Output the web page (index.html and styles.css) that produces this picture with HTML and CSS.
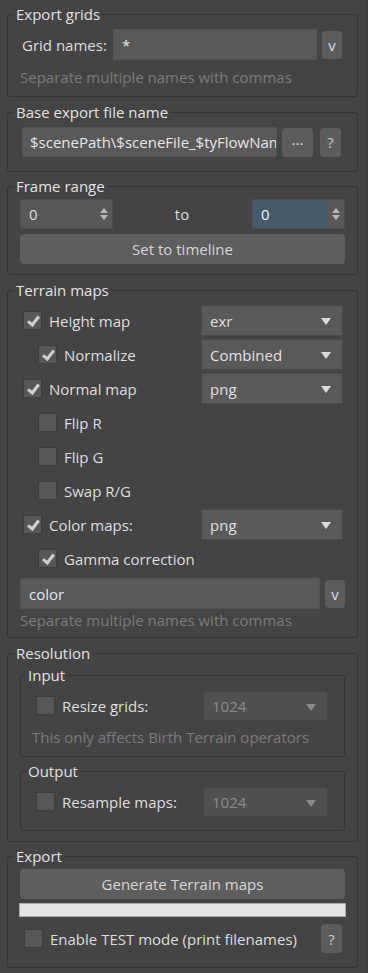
FILE: index.html
```html
<!DOCTYPE html>
<html lang="en">
<head>
  <meta charset="UTF-8">
  <title>Export Terrain</title>
  <link rel="stylesheet" href="styles.css">
</head>
<body>
  <div class="panel">

    <!-- Export grids -->
    <fieldset class="group g-grids">
      <legend>Export grids</legend>
      <div class="row names-row">
        <span class="lbl">Grid names:</span>
        <div class="field grow">*</div>
        <div class="btn v-btn">v</div>
      </div>
      <div class="hint">Separate multiple names with commas</div>
    </fieldset>

    <!-- Base file name -->
    <fieldset class="group g-base">
      <legend>Base export file name</legend>
      <div class="row path-row">
        <div class="field grow path">$scenePath\$sceneFile_$tyFlowName</div>
        <div class="btn dots-btn">...</div>
        <div class="btn q-btn">?</div>
      </div>
    </fieldset>

    <!-- Frame range -->
    <fieldset class="group g-frames">
      <legend>Frame range</legend>
      <div class="row range-row">
        <div class="spinner">
          <span class="spin-val">0</span>
          <span class="arrows"><i class="up"></i><i class="down"></i></span>
        </div>
        <span class="to">to</span>
        <div class="spinner active">
          <span class="spin-val">0</span>
          <span class="arrows"><i class="up"></i><i class="down"></i></span>
        </div>
      </div>
      <div class="btn wide timeline-btn">Set to timeline</div>
    </fieldset>

    <!-- Terrain maps -->
    <fieldset class="group g-maps">
      <legend>Terrain maps</legend>
      <div class="maps">
        <div class="row check-row">
          <span class="cb on"></span><span class="cb-lbl">Height map</span>
          <div class="drop">exr</div>
        </div>
        <div class="row check-row sub">
          <span class="cb on"></span><span class="cb-lbl">Normalize</span>
          <div class="drop">Combined</div>
        </div>
        <div class="row check-row">
          <span class="cb on"></span><span class="cb-lbl">Normal map</span>
          <div class="drop">png</div>
        </div>
        <div class="row check-row sub">
          <span class="cb"></span><span class="cb-lbl">Flip R</span>
        </div>
        <div class="row check-row sub">
          <span class="cb"></span><span class="cb-lbl">Flip G</span>
        </div>
        <div class="row check-row sub">
          <span class="cb"></span><span class="cb-lbl">Swap R/G</span>
        </div>
        <div class="row check-row">
          <span class="cb on"></span><span class="cb-lbl">Color maps:</span>
          <div class="drop">png</div>
        </div>
        <div class="row check-row sub">
          <span class="cb on"></span><span class="cb-lbl">Gamma correction</span>
        </div>
      </div>
      <div class="row color-row">
        <div class="field grow">color</div>
        <div class="btn v-btn">v</div>
      </div>
      <div class="hint tight">Separate multiple names with commas</div>
    </fieldset>

    <!-- Resolution -->
    <fieldset class="group g-res">
      <legend>Resolution</legend>
      <fieldset class="group inner g-input">
        <legend>Input</legend>
        <div class="row check-row">
          <span class="cb"></span><span class="cb-lbl">Resize grids:</span>
          <div class="drop off">1024</div>
        </div>
        <div class="hint">This only affects Birth Terrain operators</div>
      </fieldset>
      <fieldset class="group inner g-output">
        <legend>Output</legend>
        <div class="row check-row">
          <span class="cb"></span><span class="cb-lbl">Resample maps:</span>
          <div class="drop off">1024</div>
        </div>
      </fieldset>
    </fieldset>

    <!-- Export -->
    <fieldset class="group g-export">
      <legend>Export</legend>
      <div class="btn wide generate-btn">Generate Terrain maps</div>
      <div class="progress"></div>
      <div class="row test-row">
        <span class="cb"></span><span class="cb-lbl">Enable TEST mode (print filenames)</span>
        <div class="btn q-btn">?</div>
      </div>
    </fieldset>

  </div>
</body>
</html>
```

FILE: styles.css
```css
* {
  box-sizing: border-box;
}

body {
  margin: 0;
  background-color: #444444;
  font-family: "Open Sans", "Noto Sans", sans-serif;
  font-size: 15px;
  color: #dedede;
}

.panel {
  width: 367px;
  min-height: 973px;
  padding: 5px 8px 0 7px;
  border-right: 1px solid #383838;
}

/* group boxes */
.group {
  min-width: 0;
  margin: 0 0 6px;
  padding: 6px 12px 10px;
  border: 1px solid #353535;
  border-radius: 3px;
}
.group legend {
  margin-left: -6px;
  padding: 0 2px;
  line-height: 18px;
  color: #e2e2e2;
}

.g-base { padding-bottom: 14px; margin-bottom: 5px; }
.g-frames { padding-top: 4px; }
.g-maps { padding-bottom: 8px; }
.g-res { padding-top: 4px; padding-bottom: 10px; margin-bottom: 5px; }
.g-export { padding-top: 4px; padding-bottom: 14px; }

.inner {
  margin: 0;
  padding: 6px 12px 10px 11px;
}
.g-output { margin-top: 5px; padding-bottom: 13px; }

/* rows */
.row {
  display: flex;
  align-items: center;
  height: 31px;
}
.grow {
  flex: 1;
  min-width: 0;
}

.lbl {
  width: 93px;
  padding-left: 2px;
  white-space: nowrap;
}

.field {
  height: 100%;
  padding: 0 8px;
  display: flex;
  align-items: center;
  background-color: #595959;
  border: 1px solid #525252;
  color: #e6e6e6;
  white-space: nowrap;
  overflow: hidden;
}

.hint {
  margin-top: 8px;
  line-height: 18px;
  color: #7a7a7a;
  white-space: nowrap;
}
.hint.tight { margin-top: 2px; }

/* buttons */
.btn {
  display: flex;
  align-items: center;
  justify-content: center;
  background-color: #5c5c5c;
  border-radius: 4px;
  color: #dedede;
}
.v-btn {
  width: 20px;
  height: 28px;
  margin-left: 5px;
  color: #d3dfea;
}
.names-row { padding-right: 3px; }
.color-row { margin-top: 4px; }

.path-row {
  height: 30px;
  padding: 0 4px 0 2px;
}
.path {
  padding-left: 7px;
  margin-right: 5px;
}
.dots-btn {
  width: 31px;
  height: 29px;
  margin-right: 7px;
  padding-bottom: 6px;
}
.q-btn {
  width: 21px;
  height: 29px;
  color: #c9c9c9;
}

.wide {
  height: 30px;
  background-color: #5e5e5e;
  color: #d6d6d6;
}
.timeline-btn { margin-top: 5px; }

/* spinners */
.range-row {
  height: 30px;
  justify-content: space-between;
}
.to { padding-right: 1px; }
.spinner {
  width: 93px;
  height: 100%;
  display: flex;
  align-items: center;
  background-color: #585858;
  border: 1px solid #4e4e4e;
}
.spin-val {
  flex: 1;
  height: 100%;
  padding-left: 8px;
  display: flex;
  align-items: center;
}
.spinner.active .spin-val {
  background-color: #455a6a;
  color: #f2f2f2;
}
.arrows {
  width: 16px;
  display: flex;
  flex-direction: column;
  align-items: center;
  gap: 2px;
}
.arrows i {
  width: 0;
  height: 0;
  border-left: 4px solid transparent;
  border-right: 4px solid transparent;
}
.arrows .up { border-bottom: 5px solid #b8b8b8; }
.arrows .down { border-top: 5px solid #b8b8b8; }

/* checkboxes */
.maps {
  display: flex;
  flex-direction: column;
  gap: 3px;
}
.check-row { padding-left: 3px; padding-right: 2px; }
.check-row.sub { padding-left: 18px; }
.cb {
  flex: none;
  width: 19px;
  height: 19px;
  background-color: #575757;
  border: 1px solid #3d3d3d;
  position: relative;
}
.cb.on::after {
  content: "";
  position: absolute;
  left: 6px;
  top: 2px;
  width: 4px;
  height: 9px;
  border-right: 3px solid #cfcfcf;
  border-bottom: 3px solid #cfcfcf;
  transform: rotate(38deg);
}
.cb-lbl {
  margin-left: 7px;
  flex: 1;
  white-space: nowrap;
}

/* dropdowns */
.drop {
  width: 142px;
  height: 31px;
  padding-left: 8px;
  display: flex;
  align-items: center;
  background-color: #595959;
  border: 1px solid #4a4a4a;
  position: relative;
  color: #e0e0e0;
}
.drop::after {
  content: "";
  position: absolute;
  right: 11px;
  top: 12px;
  border-left: 5px solid transparent;
  border-right: 5px solid transparent;
  border-top: 7px solid #dcdcdc;
}
.drop.off {
  width: 125px;
  height: 30px;
  margin-right: 2px;
  background-color: #505050;
  border-color: #474747;
  color: #8a8a8a;
}
.drop.off::after { border-top-color: #8a8a8a; }

.g-input .check-row,
.g-output .check-row { padding-left: 4px; }
.g-input .hint { margin-top: 7px; padding-left: 0; }

/* export */
.progress {
  height: 14px;
  margin: 4px -1px 0;
  background-color: #e4e4e4;
  border: 1px solid #a9a9a9;
}
.test-row {
  height: 29px;
  margin-top: 7px;
  padding: 0 3px 0 4px;
}
```
